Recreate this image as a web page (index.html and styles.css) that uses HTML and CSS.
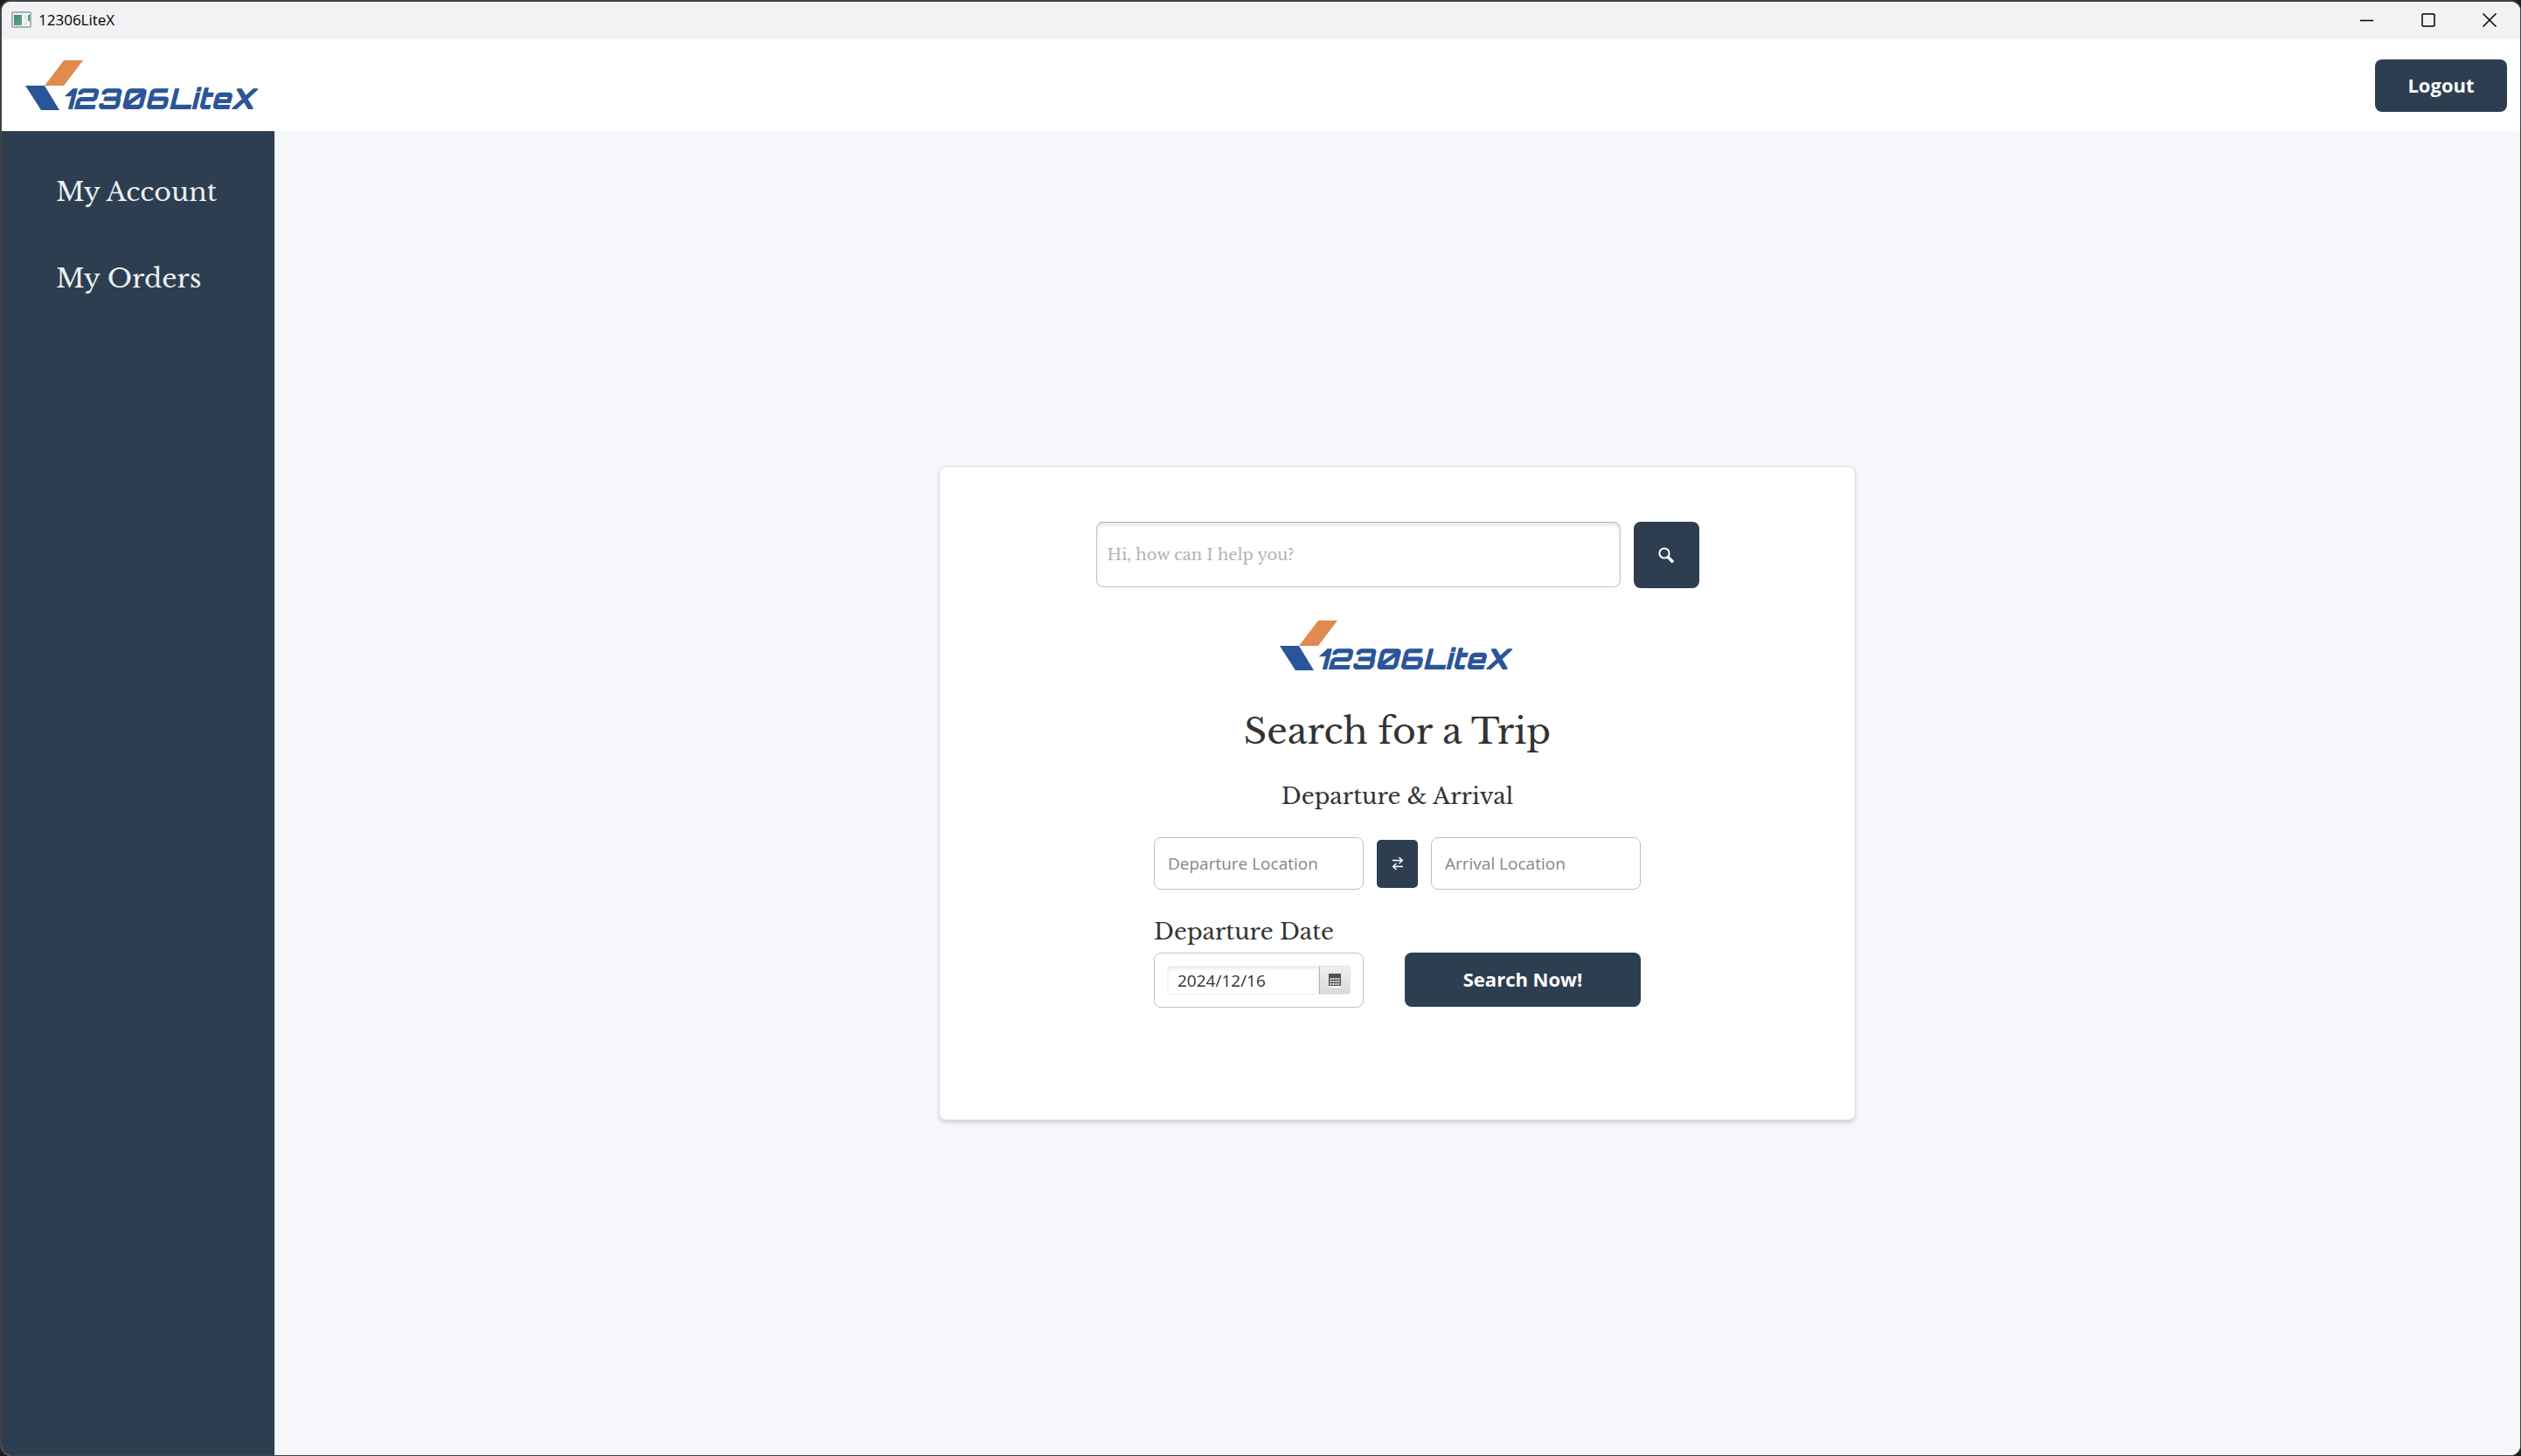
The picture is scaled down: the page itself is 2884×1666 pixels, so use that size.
FILE: index.html
```html
<!DOCTYPE html>
<html lang="en">
<head>
<meta charset="utf-8">
<title>12306LiteX</title>
<link rel="stylesheet" href="styles.css">
</head>
<body>
<div class="window">
  <div class="titlebar">
    <svg class="app-icon" viewBox="0 0 23 19" aria-hidden="true">
      <defs>
        <linearGradient id="pane" x1="0" y1="0" x2="1" y2="1">
          <stop offset="0" stop-color="#3f7f96"/>
          <stop offset="1" stop-color="#5fb070"/>
        </linearGradient>
      </defs>
      <rect x="1" y="1" width="21" height="17" rx="1" fill="#f4f6f8" stroke="#a9b0b8" stroke-width="2"/>
      <rect x="3" y="4" width="9" height="12" fill="url(#pane)"/>
      <rect x="14" y="4" width="4" height="6" fill="#e3e6e8"/>
      <rect x="14" y="12" width="4" height="4" fill="#e3e6e8"/>
      <rect x="19" y="4" width="2" height="7" fill="url(#pane)"/>
    </svg>
    <span class="window-title">12306LiteX</span>
    <div class="window-controls">
      <button type="button" aria-label="Minimize"><svg viewBox="0 0 16 16"><path d="M0 8.5h15"/></svg></button>
      <button type="button" aria-label="Maximize"><svg viewBox="0 0 16 16"><rect x="1" y="1" width="14" height="14" rx="1"/></svg></button>
      <button type="button" aria-label="Close"><svg viewBox="0 0 16 16"><path d="M.5.5l15 15M15.5.5l-15 15"/></svg></button>
    </div>
  </div>
  <header class="header">
    <svg class="logo" viewBox="0 0 270 60">
      <path fill="#e08a4f" d="M44 1h22L44 30H22z"/>
      <path fill="#2a5598" d="M0 30h22l17 28H18z"/>
      <text class="logo-text" x="41" y="57">12306LiteX</text>
    </svg>
    <button type="button" class="btn logout">Logout</button>
  </header>
  <div class="body">
    <nav class="sidebar">
      <a href="#account">My Account</a>
      <a href="#orders">My Orders</a>
    </nav>
    <main class="main">
      <section class="card">
        <form class="ask">
          <input type="text" class="ask-input" placeholder="Hi, how can I help you?" aria-label="Ask a question">
          <button type="button" class="btn ask-btn" aria-label="Search">
            <svg viewBox="0 0 19 19"><circle cx="7" cy="7" r="5.6" stroke-width="2"/><path d="M11 11.200l6 6" stroke-width="3.4"/></svg>
          </button>
        </form>
        <svg class="logo" viewBox="0 0 270 60">
          <path fill="#e08a4f" d="M44 1h22L44 30H22z"/>
          <path fill="#2a5598" d="M0 30h22l17 28H18z"/>
          <text class="logo-text" x="41" y="57">12306LiteX</text>
        </svg>
        <h1>Search for a Trip</h1>
        <h2>Departure &amp; Arrival</h2>
        <form class="trip">
          <div class="places">
            <input type="text" class="field" placeholder="Departure Location" aria-label="Departure Location">
            <button type="button" class="btn swap" aria-label="Swap departure and arrival">
              <svg viewBox="0 0 14 16"><path d="M1 4.500h11M8.500 1l3.800 3.500L8.500 8M13 11.500H2M5.500 8L1.700 11.500 5.500 15"/></svg>
            </button>
            <input type="text" class="field" placeholder="Arrival Location" aria-label="Arrival Location">
          </div>
          <label class="date-label" for="date">Departure Date</label>
          <div class="date-row">
            <div class="date-box">
              <input type="text" id="date" value="2024/12/16">
              <button type="button" class="date-btn" aria-label="Open calendar">
                <svg viewBox="0 0 14 16"><path fill="#505050" d="M0 0h14v14H0z"/><path stroke="#fff" stroke-width="2" d="M0 15h14"/><path stroke="#e8e8e8" stroke-width="2" stroke-dasharray="2 1" d="M1.500 6h11M1.500 9h11M1.500 12h11"/></svg>
              </button>
            </div>
            <button type="button" class="btn search-now">Search Now!</button>
          </div>
        </form>
      </section>
    </main>
  </div>
</div>
</body>
</html>
```
FILE: styles.css
```css
* { box-sizing: border-box; }

:root {
  --navy: #2d3e50;
  --serif: "Libre Baskerville", "Liberation Serif", serif;
  --sans: "Segoe UI", "Open Sans", "Noto Sans", sans-serif;
}

body {
  margin: 0;
  background: #1e1e1e;
  font-family: var(--sans);
  font-size: 19px;
  color: #333;
}

button, input { font: inherit; color: inherit; margin: 0; padding: 0; }

.window {
  display: flex;
  flex-direction: column;
  min-height: 100vh;
  border: 2px solid #424242;
  border-width: 2px 1px 1px 2px;
  border-radius: 12px;
  overflow: hidden;
  background: #fff;
}

.titlebar {
  display: flex;
  align-items: center;
  height: 43px;
  padding: 0 0 2px 11px;
  background: #f2f2f4;
  color: #000;
}
.app-icon { width: 23px; height: 19px; margin-right: 8px; }
.window-title { font-size: 17px; }
.window-controls { display: flex; margin-left: auto; }
.window-controls button {
  display: grid;
  place-items: center;
  width: 70px;
  height: 41px;
  border: 0;
  background: none;
}
.window-controls svg { width: 16px; height: 16px; fill: none; stroke: #000; stroke-width: 1.5; }

.header {
  display: flex;
  align-items: center;
  justify-content: space-between;
  height: 105px;
  padding: 0 15px 0 27px;
}
.logo { display: block; width: 270px; height: 60px; overflow: visible; }
.logo-text { font: italic 900 33px "Orbitron", "DejaVu Sans", sans-serif; fill: #2a5598; }

.btn {
  display: grid;
  place-items: center;
  border: 0;
  border-radius: 8px;
  background: var(--navy);
  color: #fff;
  font-weight: bold;
  font-size: 22px;
}
.logout { width: 151px; height: 60px; padding-bottom: 2px; }

.body { display: flex; flex: 1; }
.sidebar {
  display: flex;
  flex-direction: column;
  gap: 48px;
  width: 312px;
  padding: 44px 62px;
  background: var(--navy);
}
.sidebar a {
  font: 30px/51px var(--serif);
  color: #ecf0f1;
  text-decoration: none;
  white-space: nowrap;
}

.main { display: grid; flex: 1; place-items: center; background: #f5f7fb; }
.card {
  display: flex;
  flex-direction: column;
  align-items: center;
  width: 1049px;
  padding: 63px 0 128px;
  border: 1px solid #dcdcdc;
  border-radius: 8px;
  background: #fff;
  box-shadow: 0 3px 4px rgba(0, 0, 0, .14);
}

.ask { display: flex; gap: 15px; margin-bottom: 36px; }
.ask-input {
  width: 600px;
  height: 75px;
  padding: 0 12px;
  border: 1px solid #c4c4c4;
  border-top-color: #b4b4b4;
  border-radius: 8px;
  font: 18px var(--serif);
  box-shadow: inset 0 3px 4px rgba(0, 0, 0, .1);
}
.ask-input::placeholder { color: #b2b2b2; }
.ask-btn { width: 75px; height: 76px; }
.ask-btn svg { width: 19px; height: 19px; fill: none; stroke: #fff; }

h1, h2, .date-label { margin: 0; font-family: var(--serif); font-weight: normal; }
h1 { margin-top: 38px; font-size: 41px; line-height: 60px; }
h2 { margin-top: 24px; font-size: 26px; line-height: 40px; }

.trip { display: flex; flex-direction: column; margin-top: 27px; }
.places { display: flex; align-items: center; gap: 15px; }
.field {
  width: 240px;
  height: 60px;
  padding: 0 15px;
  border: 1px solid #c0c0c0;
  border-radius: 8px;
  background: #fff;
}
.field::placeholder { color: #868686; }
.swap { width: 47px; height: 55px; border-radius: 5px; }
.swap svg { width: 14px; height: 16px; fill: none; stroke: #fff; stroke-width: 1.5; }

.date-label { margin-top: 28px; font-size: 26px; line-height: 40px; }
.date-row { display: flex; justify-content: space-between; margin-top: 4px; }
.date-box {
  display: flex;
  width: 240px;
  height: 63px;
  padding: 14px;
  border: 1px solid #c0c0c0;
  border-radius: 8px;
}
.date-box input {
  flex: 1;
  min-width: 0;
  padding-left: 11px;
  border: 1px solid #f0f0f0;
  border-radius: 4px 0 0 4px;
  box-shadow: inset 0 3px 3px rgba(0, 0, 0, .07);
}
.date-btn {
  display: grid;
  place-items: center;
  width: 36px;
  border: 1px solid #e4e4e4;
  border-left-color: #b4b4b4;
  border-radius: 0 4px 4px 0;
  background: linear-gradient(#efefef, #d9d9d9);
}
.date-btn svg { width: 14px; height: 16px; }
.search-now { width: 270px; height: 62px; padding-bottom: 2px; }
```
